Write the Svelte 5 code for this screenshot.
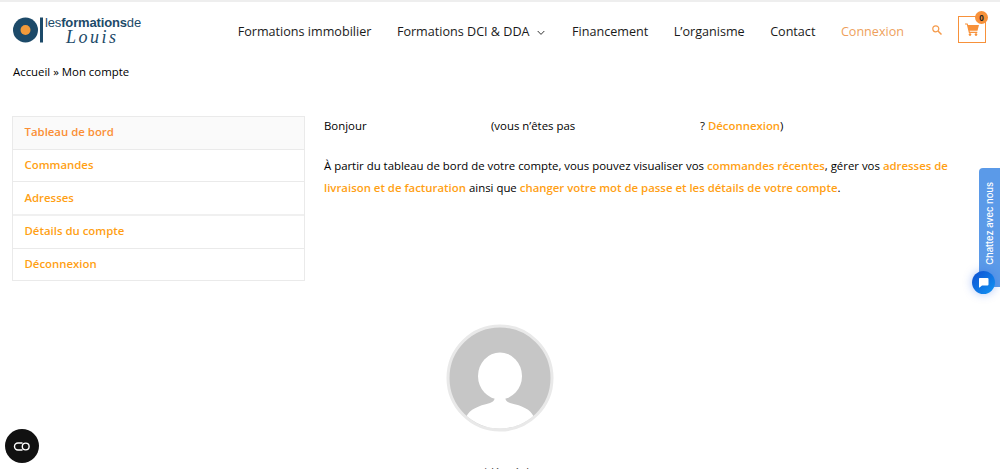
<script>
  const nav = ['Formations immobilier', 'Formations DCI & DDA', 'Financement', 'L’organisme', 'Contact'];
  const side = ['Tableau de bord', 'Commandes', 'Adresses', 'Détails du compte', 'Déconnexion'];
</script>

<div class="page">
  <header class="top">
    <div class="logo">
      <svg class="mark" width="31" height="26" viewBox="0 0 31 26">
        <circle cx="12.5" cy="13" r="12.5" fill="#1d4a69" />
        <circle cx="12.5" cy="13" r="5" fill="#f39a3a" />
        <rect x="27" y="0.5" width="3" height="25" fill="#1d4a69" />
      </svg>
      <div class="wordmark">
        <div class="line1">les<b>formations</b>de</div>
        <div class="line2">Louis</div>
      </div>
    </div>
    <nav class="nav">
      {#each nav as item, i}
        <span class="navitem">{item}{#if i === 1}<svg class="chev" width="8" height="6" viewBox="0 0 8 6"><path d="M.7 1 4 4.4 7.3 1" fill="none" stroke="#333" stroke-width="1"/></svg>{/if}</span>
      {/each}
      <span class="navitem login">Connexion</span>
      <svg class="search" width="10" height="10" viewBox="0 0 10 10"><circle cx="3.8" cy="3.8" r="3" fill="none" stroke="#f59a4a" stroke-width="1.2"/><path d="M6 6 9.5 9.5" stroke="#f59a4a" stroke-width="1.5"/></svg>
      <div class="cart">
        <svg width="14" height="13" viewBox="0 0 14 13"><path d="M0 .5h2.6l.5 1.6H14l-1.5 5.6H4.6l.3 1.1h7.4v1.1H3.9L1.8 1.6H0z" fill="#f7913a"/><circle cx="5" cy="11.6" r="1.3" fill="#f7913a"/><circle cx="11" cy="11.6" r="1.3" fill="#f7913a"/></svg>
        <span class="badge">0</span>
      </div>
    </nav>
  </header>

  <div class="crumb">Accueil » Mon compte</div>

  <main class="account">
    <ul class="side">
      {#each side as s, i}
        <li class:active={i === 0}>{s}</li>
      {/each}
    </ul>
    <div class="content">
      <p class="hello">
        <span class="w1">Bonjour</span><span class="w2">(vous n’êtes pas</span><span class="w3">? <a href="#top">Déconnexion</a>)</span>
      </p>
      <p class="intro">À partir du tableau de bord de votre compte, vous pouvez visualiser vos <a href="#top">commandes récentes</a>, gérer vos <a href="#top">adresses de livraison et de facturation</a> ainsi que <a href="#top">changer votre mot de passe et les détails de votre compte</a>.</p>
    </div>
  </main>

  <section class="profile">
    <svg width="108" height="108" viewBox="0 0 108 108">
      <defs><clipPath id="av"><circle cx="54" cy="54" r="50.5" /></clipPath></defs>
      <circle cx="54" cy="54" r="52" fill="#c6c6c6" stroke="#e9e9e9" stroke-width="3" />
      <g clip-path="url(#av)" fill="#fff">
        <ellipse cx="54" cy="52" rx="22" ry="23.5" />
        <path d="M20 93c4-8 12-11 24-14 3-1 5-3 5-7h10c0 4 2 6 5 7 13 3 20 6 24 14v17H20z" />
      </g>
    </svg>
    <div class="cut">vidéo sèche</div>
  </section>

  <aside class="chat">
    <div class="chat-tab"><span>Chattez avec nous</span></div>
    <div class="chat-btn">
      <svg width="11" height="11" viewBox="0 0 11 11"><path d="M1.5 1h8a1 1 0 0 1 1 1v5.5a1 1 0 0 1-1 1H4L1.6 10.5a.4.4 0 0 1-.6-.3V2a1 1 0 0 1 .5-1z" fill="#fff"/></svg>
    </div>
  </aside>

  <div class="cookie">
    <svg width="18" height="9" viewBox="0 0 18 9"><path d="M9.5 1H5a3.5 3.5 0 0 0 0 7h4.5" fill="none" stroke="#fff" stroke-width="1.4"/><circle cx="12.7" cy="4.5" r="3.4" fill="none" stroke="#fff" stroke-width="1.4"/></svg>
  </div>
</div>

<style>
  :global(body) { margin: 0; background: #fff; overflow: hidden; }
  .page {
    position: relative;
    width: 1000px;
    height: 469px;
    overflow: hidden;
    box-sizing: border-box;
    border-top: 2px solid #eeeeee;
    font-family: "Open Sans", sans-serif;
    color: #000;
    font-size: 11.4px;
  }
  .top {
    display: flex;
    justify-content: space-between;
    align-items: flex-start;
    height: 57px;
    padding: 13px 14px 0 13px;
    box-sizing: border-box;
  }
  .logo { display: flex; align-items: flex-start; }
  .mark { margin-top: 2px; }
  .wordmark { margin-left: 1px; color: #1d4a69; }
  .line1 { font-family: "Liberation Sans", sans-serif; font-size: 13px; line-height: 16px; letter-spacing: -0.15px; white-space: nowrap; }
  .line1 b { font-weight: 700; }
  .line2 {
    font-family: "Liberation Serif", serif;
    font-style: italic;
    font-size: 18px;
    line-height: 13px;
    letter-spacing: 2.5px;
    margin-left: 21px;
  }
  .nav { display: flex; align-items: center; height: 34px; }
  .navitem { font-size: 12.6px; line-height: 32px; color: #1a1a1a; margin-right: 25.5px; white-space: nowrap; }
  .chev { margin: 0 2px 0 7px; vertical-align: 0; }
  .login { color: #ee9f5c; margin-right: 28px; }
  .search { margin-right: 16px; margin-top: -5px; }
  .cart {
    position: relative;
    width: 28px;
    height: 27px;
    box-sizing: border-box;
    border: 1px solid #f7913a;
    display: flex;
    align-items: center;
    justify-content: center;
    margin-top: -5px;
  }
  .badge {
    position: absolute;
    top: -6px;
    right: -3px;
    width: 13px;
    height: 13px;
    border-radius: 50%;
    background: #f7913a;
    font-size: 8px;
    font-weight: 700;
    line-height: 13px;
    text-align: center;
    color: #222;
  }
  .crumb { padding-left: 13px; font-size: 11.4px; line-height: 18px; height: 18px; margin-top: 4px; }
  .account { display: flex; padding: 0 12px; margin-top: 35px; }
  .side {
    list-style: none;
    margin: 0;
    padding: 0;
    width: 293px;
    height: 165px;
    box-sizing: border-box;
    border: 1px solid #eaeaea;
    flex: none;
  }
  .side li {
    height: 33px;
    box-sizing: border-box;
    border-bottom: 1px solid #eaeaea;
    padding-left: 11.5px;
    font-weight: 600;
    font-size: 11.4px;
    line-height: 29px;
    color: #ff9f14;
  }
  .side li:nth-child(2) { height: 32px; }
  .side li:nth-child(3) { height: 34px; line-height: 31px; border-bottom: 2px solid #f0f0f0; }
  .side li:last-child { border-bottom: 0; height: 32px; line-height: 29px; }
  .side li.active { background: #fafafa; color: #fb8f35; }
  .content { margin-left: 19px; flex: 1; }
  .content p { margin: 0; font-size: 11.4px; line-height: 22px; }
  .hello { display: flex; margin-top: -1px !important; }
  .w1 { width: 167px; }
  .w2 { width: 209px; }
  .intro { margin-top: 18px !important; width: 640px; }
  .content a { color: #ff9f14; font-weight: 600; text-decoration: none; }
  .profile {
    position: absolute;
    left: 446px;
    top: 322px;
    width: 108px;
    text-align: center;
  }
  .profile svg { display: block; }
  .cut {
    margin-top: 32px;
    padding-left: 18px;
    font-size: 11px;
    white-space: nowrap;
    height: 7px;
    overflow: hidden;
    color: #333;
  }
  .chat { position: absolute; top: 166px; right: 0; width: 28px; height: 128px; }
  .chat-tab {
    position: absolute;
    left: 7px;
    top: 0;
    width: 21px;
    height: 119px;
    background: #5b9ae8;
    border-radius: 4px 0 0 0;
    display: flex;
    justify-content: center;
    padding-top: 14px;
    box-sizing: border-box;
  }
  .chat-tab span {
    writing-mode: vertical-rl;
    transform: rotate(180deg);
    color: #fff;
    font-size: 9.4px;
    font-weight: 500;
    font-family: "Inter", sans-serif;
    white-space: nowrap;
    align-self: flex-start;
  }
  .chat-btn {
    position: absolute;
    left: 0;
    top: 103px;
    width: 23px;
    height: 23px;
    border-radius: 50%;
    background: linear-gradient(135deg, #0f4fd0, #1196f5);
    box-shadow: 0 0 10px rgba(30, 90, 230, 0.35);
    display: flex;
    align-items: center;
    justify-content: center;
  }
  .cookie {
    position: absolute;
    left: 5px;
    top: 427px;
    width: 34px;
    height: 34px;
    border-radius: 50%;
    background: #111;
    display: flex;
    align-items: center;
    justify-content: center;
  }
</style>
